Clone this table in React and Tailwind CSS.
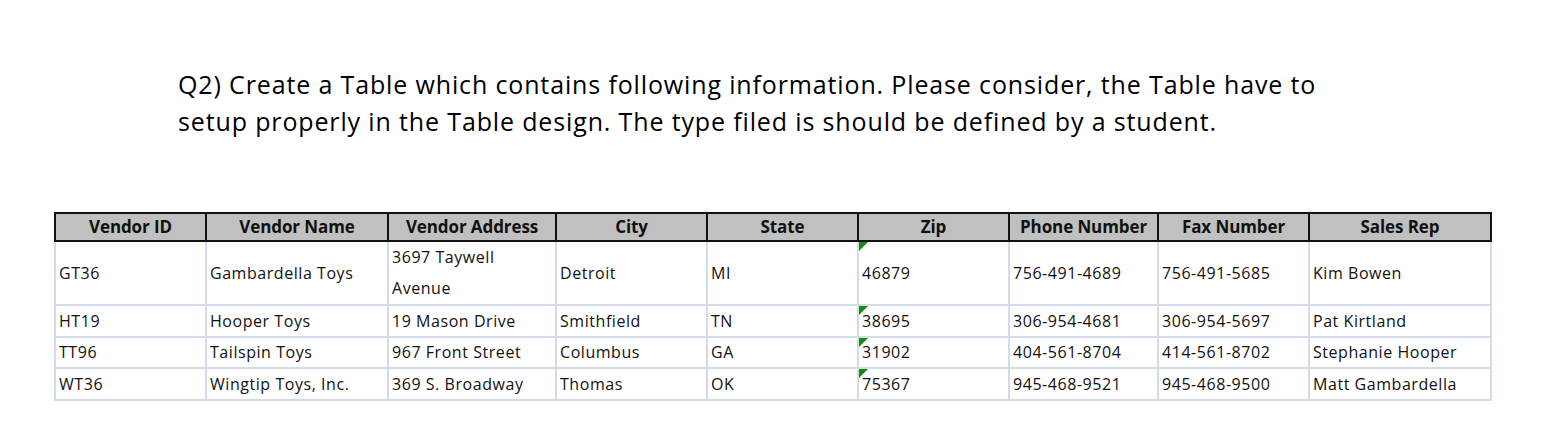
import React from "react";

const cols = [151, 182, 168, 151, 151, 151, 149, 151, 182];
const headers = ["Vendor ID", "Vendor Name", "Vendor Address", "City", "State", "Zip", "Phone Number", "Fax Number", "Sales Rep"];
const rows = [
  { h: "h-[62px]", lh: "leading-[31px]", cells: ["GT36", "Gambardella Toys", ["3697 Taywell", "Avenue"], "Detroit", "MI", "46879", "756-491-4689", "756-491-5685", "Kim Bowen"] },
  { h: "h-[30px]", lh: "leading-[30px]", cells: ["HT19", "Hooper Toys", "19 Mason Drive", "Smithfield", "TN", "38695", "306-954-4681", "306-954-5697", "Pat Kirtland"] },
  { h: "h-[29px]", lh: "leading-[29px]", cells: ["TT96", "Tailspin Toys", "967 Front Street", "Columbus", "GA", "31902", "404-561-8704", "414-561-8702", "Stephanie Hooper"] },
  { h: "h-[30px]", lh: "leading-[30px]", cells: ["WT36", "Wingtip Toys, Inc.", "369 S. Broadway", "Thomas", "OK", "75367", "945-468-9521", "945-468-9500", "Matt Gambardella"] },
];

function Flag() {
  return (
    <svg className="absolute left-0 top-0" width="9" height="9" viewBox="0 0 9 9">
      <polygon points="0,0 9,0 0,9" fill="#138a13" />
    </svg>
  );
}

export default function App() {
  return (
    <div className="w-[1558px] h-[444px] bg-white pt-[66px] text-black" style={{ fontFamily: '"Open Sans", "Liberation Sans", sans-serif' }}>
      <p className="pl-[178px] text-[25px] leading-[37px] tracking-[0.86px] text-black">
        Q2) Create a Table which contains following information. Please consider, the Table have to
        <br />
        setup properly in the Table design. The type filed is should be defined by a student.
      </p>
      <table className="ml-[54px] mt-[72px] table-fixed border-collapse w-[1436px] text-[16px] tracking-[0.55px] text-[#111]">
        <colgroup>
          {cols.map((w, i) => (
            <col key={i} style={{ width: w }} />
          ))}
        </colgroup>
        <thead>
          <tr className="h-[28px] bg-[#c0c0c0]">
            {headers.map((h) => (
              <th key={h} className="border-2 border-[#111] font-bold text-center text-[17px] leading-[26px] tracking-[-0.1px] p-0">
                {h}
              </th>
            ))}
          </tr>
        </thead>
        <tbody>
          {rows.map((r, ri) => (
            <tr key={ri} className={r.h}>
              {r.cells.map((c, ci) => (
                <td key={ci} className={`relative border-2 border-[#d3dbea] px-[3px] py-0 align-middle whitespace-nowrap overflow-hidden ${r.lh}`}>
                  {ci === 5 && <Flag />}
                  {Array.isArray(c) ? (
                    <>
                      {c[0]}
                      <br />
                      {c[1]}
                    </>
                  ) : (
                    c
                  )}
                </td>
              ))}
            </tr>
          ))}
        </tbody>
      </table>
    </div>
  );
}
